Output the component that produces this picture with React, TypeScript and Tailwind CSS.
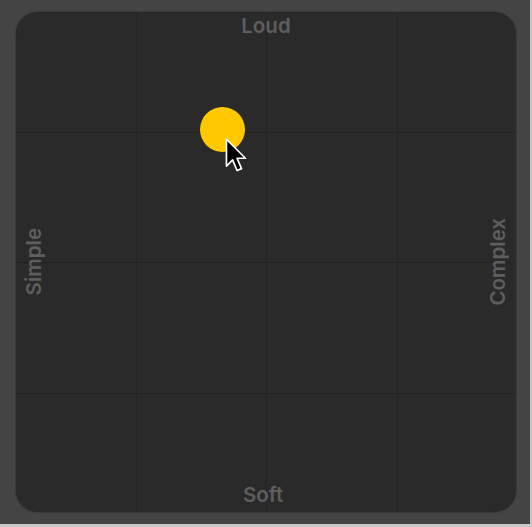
const LINES = [119.5, 250, 380.5]

function Cursor() {
  return (
    <svg width="27" height="38" viewBox="0 0 24 34" className="absolute left-[207px] top-[125px]" aria-hidden>
      <path
        d="M3 2 L3 26 L8.5 20.5 L12.5 30 L16.5 28.3 L12.5 19 L20 19 Z"
        fill="#000"
        stroke="#fff"
        strokeWidth="1.5"
        strokeLinejoin="round"
      />
    </svg>
  )
}

export default function App() {
  return (
    <div className="h-[527px] w-[532px] bg-[#c8c8c8]">
      <div className="h-[524px] w-[530px] bg-[#444444] pl-4 pt-3 font-['Inter',sans-serif]">
        <div className="relative size-[500px] overflow-hidden rounded-[22px] bg-[#2a2a2a] shadow-[0_0_2px_rgba(0,0,0,0.5)]">
          {/* grille de fond */}
          {LINES.map((p) => (
            <div key={`v${p}`} className="absolute top-0 h-full w-px bg-[#232323]" style={{ left: p }} />
          ))}
          {LINES.map((p) => (
            <div key={`h${p}`} className="absolute left-0 h-px w-full bg-[#232323]" style={{ top: p }} />
          ))}

          <div className="absolute inset-0 flex flex-col items-center justify-between pt-[1px] pb-[4px] text-[20.5px] font-semibold text-[#5e5e5e]">
            <span className="leading-[26px]">Loud</span>
            <span className="mr-[6px] leading-[26px]">Soft</span>
          </div>
          <div className="absolute inset-0 flex items-center justify-between px-[6px] text-[20.5px] font-semibold text-[#5e5e5e]">
            <span className="rotate-180 leading-[24px] [writing-mode:vertical-rl]">Simple</span>
            <span className="rotate-180 leading-[24px] [writing-mode:vertical-rl]">Complex</span>
          </div>

          <div className="absolute left-[184px] top-[95px] size-[45px] rounded-full bg-[#ffc800]" />
          <Cursor />
        </div>
      </div>
    </div>
  )
}
